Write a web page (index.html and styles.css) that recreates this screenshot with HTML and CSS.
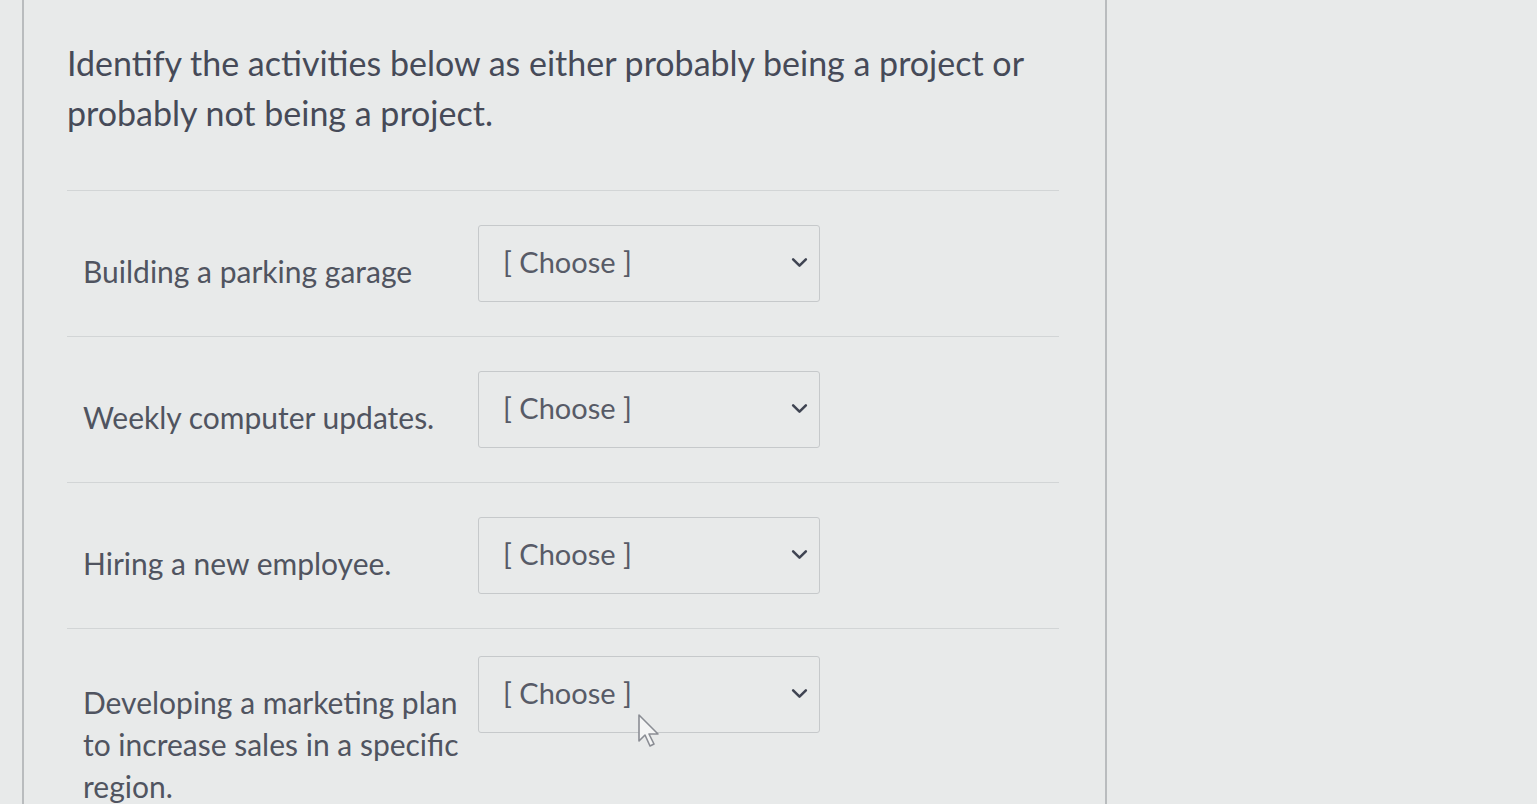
FILE: index.html
```html
<!DOCTYPE html>
<html lang="en">
<head>
<meta charset="utf-8">
<title>Quiz question</title>
<link rel="stylesheet" href="styles.css">
</head>
<body>
<div class="page">
  <main class="question">
    <p class="prompt">Identify the activities below as either probably being a project or probably not being a project.</p>
    <div class="rows">
      <div class="row">
        <div class="label">Building a parking garage</div>
        <div class="select"><span class="value">[ Choose ]</span>
          <svg class="chev" viewBox="0 0 16 10" width="17" height="11"><path d="M2 2 L8 8 L14 2" fill="none" stroke="#3f4452" stroke-width="2.4" stroke-linecap="round" stroke-linejoin="round"/></svg>
        </div>
      </div>
      <div class="row">
        <div class="label">Weekly computer updates.</div>
        <div class="select"><span class="value">[ Choose ]</span>
          <svg class="chev" viewBox="0 0 16 10" width="17" height="11"><path d="M2 2 L8 8 L14 2" fill="none" stroke="#3f4452" stroke-width="2.4" stroke-linecap="round" stroke-linejoin="round"/></svg>
        </div>
      </div>
      <div class="row">
        <div class="label">Hiring a new employee.</div>
        <div class="select"><span class="value">[ Choose ]</span>
          <svg class="chev" viewBox="0 0 16 10" width="17" height="11"><path d="M2 2 L8 8 L14 2" fill="none" stroke="#3f4452" stroke-width="2.4" stroke-linecap="round" stroke-linejoin="round"/></svg>
        </div>
      </div>
      <div class="row">
        <div class="label">Developing a marketing plan to increase sales in a specific region.</div>
        <div class="select"><span class="value">[ Choose ]</span>
          <svg class="chev" viewBox="0 0 16 10" width="17" height="11"><path d="M2 2 L8 8 L14 2" fill="none" stroke="#3f4452" stroke-width="2.4" stroke-linecap="round" stroke-linejoin="round"/></svg>
          <svg class="cursor" viewBox="0 0 26 36" width="26" height="36"><path d="M2 2 L2 28 L8 22 L13 33 L17 31 L12 21 L21 21 Z" fill="#f4f5f5" stroke="#8a8d94" stroke-width="1.6" stroke-linejoin="round"/></svg>
        </div>
      </div>
    </div>
  </main>
</div>
</body>
</html>
```

FILE: styles.css
```css
html, body {
  margin: 0;
  padding: 0;
  height: 100%;
}
body {
  background: #e8eaea;
  font-family: Lato, "Noto Sans", "Liberation Sans", sans-serif;
  color: #4a4e5b;
  overflow: hidden;
}
.page {
  display: flex;
  height: 100%;
  padding-left: 22px;
}
.question {
  width: 1085px;
  border-left: 2px solid #b9bcbe;
  border-right: 2px solid #b9bcbe;
  padding: 38px 46px 0 43px;
  box-sizing: border-box;
  min-height: 100%;
}
.prompt {
  margin: 0;
  font-size: 34px;
  line-height: 50px;
  color: #464a58;
  padding-right: 20px;
}
.rows {
  margin-top: 52px;
}
.row {
  display: flex;
  align-items: flex-start;
  border-top: 1px solid #d2d5d6;
  padding: 34px 0 34px 16px;
}
.row:last-child {
  padding-top: 27px;
}
.label {
  width: 395px;
  flex: none;
  font-size: 30px;
  line-height: 42px;
  color: #505460;
  padding-top: 25px;
}
.select {
  position: relative;
  width: 342px;
  height: 77px;
  box-sizing: border-box;
  border: 1.5px solid #c6c9cb;
  border-radius: 3px;
  display: flex;
  align-items: center;
  justify-content: space-between;
  padding: 0 11px 4px 24px;
}
.value {
  font-size: 29px;
  color: #575b67;
}
.chev {
  margin-top: 2px;
}
.cursor {
  position: absolute;
  left: 158px;
  top: 56px;
}
```
